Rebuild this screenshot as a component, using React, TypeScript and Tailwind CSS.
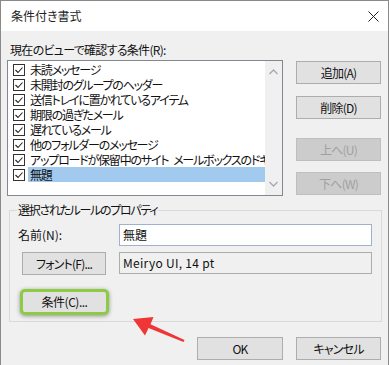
import React from 'react';

const rules = [
  { label: '未読メッセージ', selected: false },
  { label: '未開封のグループのヘッダー', selected: false },
  { label: '送信トレイに置かれているアイテム', selected: false },
  { label: '期限の過ぎたメール', selected: false },
  { label: '遅れているメール', selected: false },
  { label: '他のフォルダーのメッセージ', selected: false },
  { label: 'アップロードが保留中のサイト\u2002メールボックスのドキュメント', selected: false },
  { label: '無題', selected: true },
];

function CheckBox() {
  return (
    <span className="flex h-[12px] w-[12px] shrink-0 items-center justify-center border border-[#333] bg-white">
      <svg width="10" height="10" viewBox="0 0 10 10" fill="none">
        <path d="M1.5 5 L4 7.5 L8.5 2.5" stroke="#222" strokeWidth="1.1" />
      </svg>
    </span>
  );
}

function Btn({ children, disabled = false, className = '' }: { children: React.ReactNode; disabled?: boolean; className?: string }) {
  return (
    <button
      type="button"
      className={
        'flex h-[23px] items-center justify-center border text-[12px] tracking-[-0.8px] ' +
        (disabled ? 'border-[#bfbfbf] bg-[#cccccc] text-[#a0a0a0] ' : 'border-[#adadad] bg-[#e1e1e1] text-[#111] ') +
        className
      }
    >
      {children}
    </button>
  );
}

export default function App() {
  return (
    <div className="relative h-[365px] w-[389px] overflow-hidden border-l border-r border-t border-[#8a8a8a] bg-[#f0f0f0] font-['Meiryo_UI','Noto_Sans_CJK_JP',sans-serif] text-[12px] leading-[16px] text-[#111] [font-feature-settings:'palt']">
      {/* title bar */}
      <div className="flex h-[30px] items-center justify-between bg-white pl-[10px] pr-[8px]">
        <span className="text-[12px] text-[#222]">条件付き書式</span>
        <svg width="11" height="11" viewBox="0 0 11 11" className="mr-[1px]">
          <path d="M0.5 0.5 L10.5 10.5 M10.5 0.5 L0.5 10.5" stroke="#222" strokeWidth="1" />
        </svg>
      </div>

      <div className="pl-[9px] pt-[11px]">
        <div className="h-[16px] tracking-[-0.7px]">現在のビューで確認する条件(R):</div>
      </div>

      <div className="mt-[2px] flex">
        {/* rule list */}
        <div className="ml-[6px] flex h-[136px] w-[276px] border border-[#828790] bg-white">
          <div className="flex-1 overflow-hidden pt-[1px]">
            {rules.map((r) => (
              <div key={r.label} className="flex h-[15px] items-center">
                <span className="ml-[5px]">
                  <CheckBox />
                </span>
                <span
                  className={
                    'ml-[3px] h-[15px] flex-1 overflow-hidden whitespace-nowrap px-[2px] leading-[15px] tracking-[-1.2px] ' +
                    (r.selected ? 'bg-[#a2c9ee]' : '')
                  }
                >
                  {r.label}
                </span>
              </div>
            ))}
          </div>
          <div className="flex w-[17px] flex-col items-center justify-between bg-[#f0f0f0] py-[8px]">
            <svg width="9" height="6" viewBox="0 0 9 6">
              <path d="M0.5 5 L4.5 1 L8.5 5" stroke="#a8a8a8" strokeWidth="1.3" fill="none" />
            </svg>
            <svg width="9" height="6" viewBox="0 0 9 6">
              <path d="M0.5 1 L4.5 5 L8.5 1" stroke="#a8a8a8" strokeWidth="1.3" fill="none" />
            </svg>
          </div>
        </div>

        {/* side buttons */}
        <div className="ml-[13px] mt-[1px] flex w-[85px] flex-col">
          <Btn>追加(A)</Btn>
          <Btn className="mt-[12px]">削除(D)</Btn>
          <Btn disabled className="mt-[19px]">上へ(U)</Btn>
          <Btn disabled className="mt-[11px]">下へ(W)</Btn>
        </div>
      </div>

      {/* properties group */}
      <fieldset className="ml-[8px] mt-[6px] w-[373px] border border-[#d9d9d9] pb-[6px]">
        <legend className="ml-[7px] px-[1px] leading-[16px] tracking-[-1.3px]">選択されたルールのプロパティ</legend>
        <div className="mt-[6px] flex items-center">
          <span className="ml-[8px] w-[101px]">名前(N):</span>
          <div className="flex h-[22px] w-[253px] items-center border border-[#9fb1cc] bg-white pl-[3px]">無題</div>
        </div>
        <div className="mt-[6px] flex items-start">
          <Btn className="ml-[12px] w-[84px]">フォント(F)...</Btn>
          <div className="ml-[13px] flex h-[22px] w-[253px] items-center border border-[#adadad] bg-[#f0f0f0] pl-[3px] tracking-[0.3px]">
            Meiryo UI, 14 pt
          </div>
        </div>
        <div className="ml-[10px] mt-[14px] flex h-[26px] w-[89px] items-center justify-center rounded-[5px] border-[3px] border-[#8dcb45] bg-[#e1e1e1] tracking-[-0.5px] shadow-[0_1px_4px_rgba(0,0,0,0.4)]">
          条件(C)...
        </div>
      </fieldset>

      {/* dialog buttons */}
      <div className="ml-[196px] mt-[15px] flex gap-[13px]">
        <Btn className="w-[86px]">OK</Btn>
        <Btn className="w-[85px]">キャンセル</Btn>
      </div>

      {/* annotation arrow */}
      <svg className="absolute left-[-1px] top-[-1px]" width="389" height="365" viewBox="0 0 389 365">
        <polygon
          points="133,319 153.5,317 150.5,324.3 184.5,340 183.5,342 148.5,328 145,335.5"
          fill="#ef3535"
        />
      </svg>
    </div>
  );
}
